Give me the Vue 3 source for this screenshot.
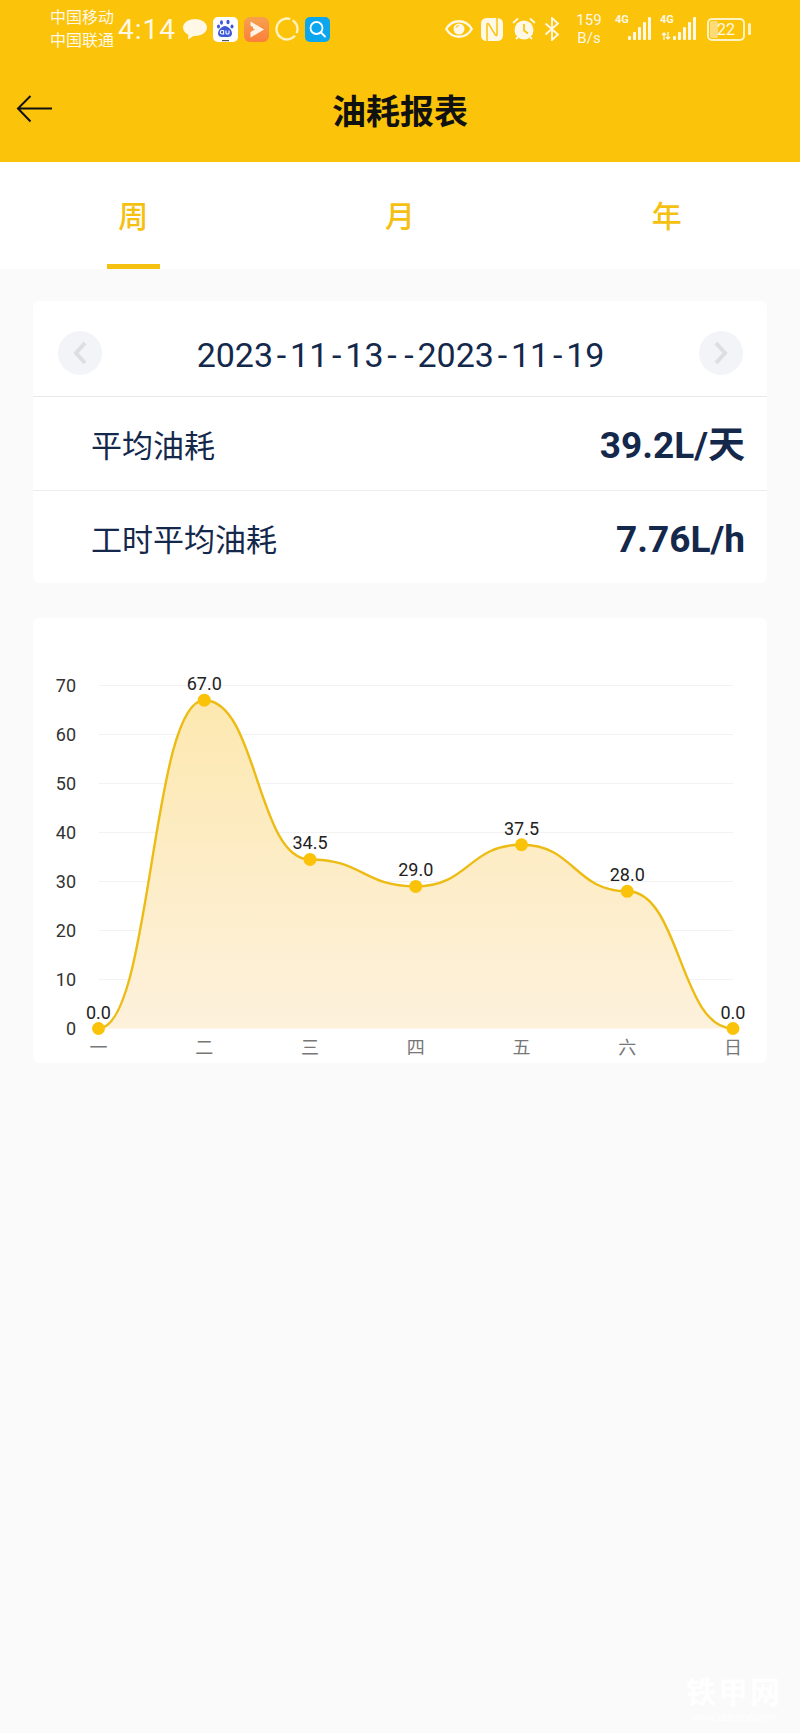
<script setup>
import { computed } from 'vue';

const tabs = ['周', '月', '年'];
const stats = [
    { label: '平均油耗', value: '39.2L/天' },
    { label: '工时平均油耗', value: '7.76L/h' }
];

// hyphens get their own span, the app font sets them much wider than Roboto
const dateParts = '2023-11-13--2023-11-19'.split(/(-)/).filter(Boolean);

const days = ['一', '二', '三', '四', '五', '六', '日'];
const values = [0, 67, 34.5, 29, 37.5, 28, 0];
const ticks = [70, 60, 50, 40, 30, 20, 10, 0];

const startX = 65.5;
const stepX = 105.75;
const baseY = 410.5;
const unitY = 4.9;
const endX = startX + stepX * 6;

const yOf = (v) => baseY - v * unitY;

const points = values.map((v, i) => ({ x: startX + i * stepX, y: yOf(v), v }));

// flat tangent at every point, control points half a step out
const linePath = computed(() => {
    let d = `M${points[0].x} ${points[0].y}`;
    for (let i = 1; i < points.length; i++) {
        const a = points[i - 1];
        const b = points[i];
        d += `C${a.x + stepX / 2} ${a.y} ${b.x - stepX / 2} ${b.y} ${b.x} ${b.y}`;
    }
    return d;
});
const areaPath = computed(() => `${linePath.value}Z`);
</script>

<template>
    <div class="page">
        <div class="top">
            <div class="status">
                <div class="carrier"><span>中国移动</span><span>中国联通</span></div>
                <div class="time">4:14</div>
                <svg class="ic-chat" viewBox="0 0 24 22">
                    <path d="M12 1C5.400 1 0 4.700 0 9.500c0 3.200 2.200 5.800 5.400 7.200L5 21.500l5.600-3.600c.5.1.9.1 1.400.1 6.600 0 12-3.800 12-8.500S18.600 1 12 1z" fill="#fff8e6" />
                </svg>
                <svg class="ic-app" viewBox="0 0 25 25">
                    <rect width="25" height="25" rx="5" fill="#fff" />
                    <g fill="#3d5ad6">
                        <ellipse cx="8.500" cy="5.500" rx="1.500" ry="2.200" />
                        <ellipse cx="15" cy="5" rx="1.600" ry="2.300" />
                        <ellipse cx="5.500" cy="9.500" rx="1.500" ry="2" />
                        <ellipse cx="19" cy="9.500" rx="1.500" ry="2" />
                        <path d="M12 9c-3 0-7 4-7 7.500C5 19 7 20 9 20h6c2 0 4-1 4-3.500C19 13 15 9 12 9z" />
                    </g>
                    <path d="M10.600 13.500v3.500H9a1.700 1.700 0 0 1 0-3.500h1.600M13 13.500v2.500c0 .8.500 1 1 1h1c.5 0 1-.2 1-1v-2.500" fill="none" stroke="#fff" stroke-width="1.100" />
                    <rect x="9" y="23" width="7" height="1.200" fill="#555" />
                </svg>
                <svg class="ic-app" viewBox="0 0 25 25">
                    <defs>
                        <linearGradient id="orangeApp" x1="0" y1="0" x2="0" y2="1">
                            <stop offset="0" stop-color="#f7a050" />
                            <stop offset="1" stop-color="#fb7f3a" />
                        </linearGradient>
                    </defs>
                    <rect width="25" height="25" rx="6" fill="url(#orangeApp)" />
                    <path d="M6.500 4.500L20 12.500 6.500 20.500V15l4.500-2.500L9 11.500V10L6.500 8.500z" fill="#fff3e4" />
                </svg>
                <svg class="ic-ring" viewBox="0 0 24 24">
                    <circle cx="12" cy="12" r="10.500" fill="none" stroke="#fff3c4" stroke-width="2.300" stroke-dasharray="14.500 3.300 45 3.300" transform="rotate(-57 12 12)" />
                </svg>
                <svg class="ic-app" viewBox="0 0 25 25">
                    <rect width="25" height="25" rx="5" fill="#0ba6ee" />
                    <circle cx="11.500" cy="11" r="6" fill="none" stroke="#fff" stroke-width="1.800" />
                    <path d="M16 15.500l4 4" stroke="#fff" stroke-width="1.800" stroke-linecap="round" />
                </svg>

                <div class="status-right">
                    <svg class="ic-eye" viewBox="0 0 28 18">
                        <path d="M1.200 9c3-5 8-7.800 12.800-7.800S23.800 4 26.800 9c-3 5-8 7.800-12.800 7.800S4.200 14 1.200 9z" fill="none" stroke="#fff8e6" stroke-width="2.400" />
                        <circle cx="14" cy="9" r="5.500" fill="#fff8e6" />
                        <path d="M11 7.500a3.500 3.500 0 0 1 3-2" fill="none" stroke="#fac30a" stroke-width="1.200" />
                    </svg>
                    <svg class="ic-nfc" viewBox="0 0 22 23">
                        <rect width="22" height="23" rx="5.500" fill="#fff8e6" />
                        <path d="M6 23V6.500c0-1.200 1-1.400 1.600-.6l6.800 11.200c.6.800 1.600.6 1.600-.6V0" fill="none" stroke="#fac30a" stroke-width="1.500" />
                    </svg>
                    <svg class="ic-alarm" viewBox="0 0 24 24">
                        <circle cx="12" cy="13" r="9.500" fill="#fff8e6" />
                        <path d="M12 7v6.500l4 3" fill="none" stroke="#fac30a" stroke-width="1.700" />
                        <path d="M1 6l5-4.500M23 6l-5-4.500M4 22l2-2M20 22l-2-2" stroke="#fff8e6" stroke-width="1.800" fill="none" />
                    </svg>
                    <svg class="ic-bt" viewBox="0 0 16 24">
                        <path d="M1.500 6.500L14 17.500 8 23V1l6 5.500L1.500 17.500" fill="none" stroke="#fff8e6" stroke-width="1.800" />
                    </svg>
                    <div class="speed"><span>159</span><span>B/s</span></div>
                    <div class="signal">
                        <span class="net">4G</span>
                        <svg class="bars" viewBox="0 0 24 23">
                            <g fill="#fff8e6">
                                <rect x="0" y="19" width="3" height="4" rx="1" />
                                <rect x="5" y="15" width="3" height="8" rx="1" />
                                <rect x="10" y="10" width="3" height="13" rx="1" />
                                <rect x="15" y="5" width="3" height="18" rx="1" />
                                <rect x="20" y="0" width="3" height="23" rx="1" />
                            </g>
                        </svg>
                    </div>
                    <div class="signal">
                        <span class="net">4G</span>
                        <svg class="arrows" viewBox="0 0 10 8">
                            <path d="M3 8V1M1 3l2-2 2 2M7 0v7M5 5l2 2 2-2" fill="none" stroke="#fff8e6" stroke-width="1.300" />
                        </svg>
                        <svg class="bars" viewBox="0 0 24 23">
                            <g fill="#fff8e6">
                                <rect x="0" y="19" width="3" height="4" rx="1" />
                                <rect x="5" y="15" width="3" height="8" rx="1" />
                                <rect x="10" y="10" width="3" height="13" rx="1" />
                                <rect x="15" y="5" width="3" height="18" rx="1" />
                                <rect x="20" y="0" width="3" height="23" rx="1" />
                            </g>
                        </svg>
                    </div>
                    <div class="battery">
                        <div class="battery-box">
                            <div class="battery-fill"></div>
                            <span>22</span>
                        </div>
                        <div class="battery-nub"></div>
                    </div>
                </div>
            </div>
            <div class="titlebar">
                <svg class="back" viewBox="0 0 37 28">
                    <path d="M36 13.500H2M14.500 1L2 13.500 14.500 26.500" fill="none" stroke="#111" stroke-width="2" />
                </svg>
                <div class="title">油耗报表</div>
            </div>
        </div>

        <div class="tabs">
            <div v-for="(tab, i) in tabs" :key="tab" class="tab" :class="{ active: i === 0 }">{{ tab }}</div>
        </div>

        <div class="card summary">
            <div class="date-row">
                <div class="nav">
                    <svg viewBox="0 0 16 26"><path d="M13 3L4 13l9 10" fill="none" stroke="#dcdee4" stroke-width="4" /></svg>
                </div>
                <div class="date">
                    <span v-for="(part, i) in dateParts" :key="i" :class="{ dash: part === '-' }">{{ part }}</span>
                </div>
                <div class="nav">
                    <svg viewBox="0 0 16 26"><path d="M3 3l9 10-9 10" fill="none" stroke="#dcdee4" stroke-width="4" /></svg>
                </div>
            </div>
            <div v-for="row in stats" :key="row.label" class="stat">
                <span class="stat-label">{{ row.label }}</span>
                <span class="stat-value">{{ row.value }}</span>
            </div>
        </div>

        <div class="card chart">
            <svg class="plot" viewBox="0 0 734 445">
                <defs>
                    <linearGradient id="areaFill" x1="0" y1="0" x2="0" y2="1">
                        <stop offset="0" stop-color="#fde8b0" />
                        <stop offset="1" stop-color="#fdf1dc" />
                    </linearGradient>
                </defs>
                <g v-for="t in ticks" :key="t">
                    <line v-if="t > 0" :x1="startX" :x2="endX" :y1="yOf(t)" :y2="yOf(t)" stroke="#f2f2f2" stroke-width="1" />
                    <text class="tick" x="43" :y="yOf(t) + 6" text-anchor="end">{{ t }}</text>
                </g>
                <path :d="areaPath" fill="url(#areaFill)" />
                <path :d="linePath" fill="none" stroke="#ecbc14" stroke-width="2.400" />
                <g v-for="(p, i) in points" :key="i">
                    <circle :cx="p.x" :cy="p.y" r="6.500" fill="#fac30a" />
                    <text class="val" :x="p.x" :y="p.y - 10" text-anchor="middle">{{ p.v.toFixed(1) }}</text>
                    <text class="day" :x="p.x" y="436" text-anchor="middle">{{ days[i] }}</text>
                </g>
            </svg>
        </div>

        <div class="watermark">
            <div class="wm-name">铁甲网</div>
            <div class="wm-url">www.cehome.com</div>
        </div>
    </div>
</template>

<style scoped>
.page {
    position: relative;
    width: 800px;
    height: 1733px;
    overflow: hidden;
    background: #fafafa;
    font-family: "Roboto", "Noto Sans CJK SC", sans-serif;
}

.top {
    height: 162px;
    background: #fbc30a;
}

.status {
    height: 58px;
    padding: 0 49px 0 50px;
    display: flex;
    align-items: center;
    color: #fff8e6;
}

.carrier {
    display: flex;
    flex-direction: column;
    width: 68px;
    font-size: 16px;
    line-height: 23px;
}

.time {
    width: 65px;
    font-size: 28px;
    letter-spacing: 1px;
}

.ic-chat {
    width: 24px;
    height: 22px;
    margin-right: 6px;
}

.ic-app {
    width: 25px;
    height: 25px;
    margin-right: 6px;
}

.ic-ring {
    width: 24px;
    height: 24px;
    margin-right: 6px;
}

.status-right {
    margin-left: auto;
    display: flex;
    align-items: center;
}

.ic-eye {
    width: 28px;
    height: 18px;
    margin-right: 8px;
}

.ic-nfc {
    width: 22px;
    height: 23px;
    margin-right: 9px;
}

.ic-alarm {
    width: 24px;
    height: 24px;
    margin-right: 8px;
}

.ic-bt {
    width: 16px;
    height: 24px;
    margin-right: 14px;
}

.speed {
    display: flex;
    flex-direction: column;
    align-items: center;
    width: 30px;
    margin-right: 11px;
    font-size: 15px;
    line-height: 18px;
}

.signal {
    position: relative;
    width: 37px;
    height: 24px;
    margin-right: 8px;
    display: flex;
    justify-content: flex-end;
}

.net {
    position: absolute;
    left: 0;
    top: -3px;
    font-size: 11px;
    line-height: 12px;
    font-weight: 700;
}

.arrows {
    position: absolute;
    left: 1px;
    bottom: 1px;
    width: 10px;
    height: 8px;
}

.bars {
    width: 24px;
    height: 23px;
}

.battery {
    display: flex;
    align-items: center;
    gap: 3px;
    margin-left: 2px;
}

.battery-box {
    position: relative;
    width: 38px;
    height: 23px;
    border: 2px solid #fff3c4;
    border-radius: 5px;
    box-sizing: border-box;
    display: flex;
    align-items: center;
    justify-content: center;
    font-size: 16px;
}

.battery-fill {
    position: absolute;
    left: 1px;
    top: 1px;
    bottom: 1px;
    width: 8px;
    background: #fddc78;
    border-radius: 2px;
}

.battery-box span {
    position: relative;
}

.battery-nub {
    width: 3px;
    height: 12px;
    border-radius: 2px;
    background: #fff3c4;
}

.titlebar {
    position: relative;
    height: 104px;
    display: flex;
    align-items: center;
    justify-content: center;
}

.back {
    position: absolute;
    left: 16px;
    top: 37px;
    width: 37px;
    height: 28px;
}

.title {
    font-family: "Noto Sans CJK SC", sans-serif;
    font-size: 34px;
    font-weight: 700;
    color: #111;
    margin-top: -2px;
}

.tabs {
    height: 107px;
    background: #fff;
    display: grid;
    grid-template-columns: repeat(3, 1fr);
}

.tab {
    position: relative;
    padding-top: 30px;
    text-align: center;
    font-family: "Noto Sans CJK SC", sans-serif;
    font-size: 30px;
    font-weight: 500;
    line-height: 44px;
    color: #f5c010;
}

.tab.active::after {
    content: "";
    position: absolute;
    left: 50%;
    bottom: 0;
    width: 53px;
    height: 5px;
    margin-left: -26.5px;
    background: #f5c010;
}

.card {
    margin: 0 33px;
    background: #fff;
    border-radius: 6px;
}

.summary {
    margin-top: 32px;
    height: 282px;
}

.date-row {
    box-sizing: border-box;
    height: 96px;
    padding: 9px 24px 0 25px;
    display: flex;
    align-items: center;
    justify-content: space-between;
    border-bottom: 1px solid #e8e8e8;
}

.nav {
    width: 44px;
    height: 44px;
    border-radius: 50%;
    background: #f3f4f8;
    display: flex;
    align-items: center;
    justify-content: center;
}

.nav svg {
    width: 16px;
    height: 26px;
}

.date {
    margin-top: 4px;
    font-size: 34px;
    color: #14284b;
}

.dash {
    margin: 0 3.8px;
}

.stat {
    height: 93px;
    padding: 0 22px 0 58px;
    display: flex;
    align-items: center;
    justify-content: space-between;
    border-bottom: 1px solid #ececec;
    color: #14284b;
}

.stat:last-child {
    border-bottom: none;
}

.stat-label {
    font-family: "Noto Sans CJK SC", sans-serif;
    font-size: 31px;
    line-height: 44px;
}

.stat-value {
    margin-top: 4px;
    font-size: 37px;
    font-weight: 700;
    line-height: 44px;
}

.chart {
    margin-top: 35px;
    height: 445px;
}

.plot {
    display: block;
    width: 734px;
    height: 445px;
}

.tick {
    font-size: 18px;
    fill: #333;
}

.val {
    font-size: 18px;
    fill: #222;
}

.day {
    font-family: "Noto Sans CJK SC", sans-serif;
    font-size: 18px;
    fill: #777;
}

.watermark {
    position: absolute;
    left: 682px;
    top: 1672px;
    width: 104px;
    color: #ffffff;
    text-align: center;
}

.wm-name {
    font-family: "Noto Sans CJK SC", sans-serif;
    font-size: 30px;
    line-height: 36px;
    letter-spacing: 2px;
    font-weight: 700;
}

.wm-url {
    margin-top: 4px;
    font-size: 10px;
    line-height: 12px;
    white-space: nowrap;
}
</style>
